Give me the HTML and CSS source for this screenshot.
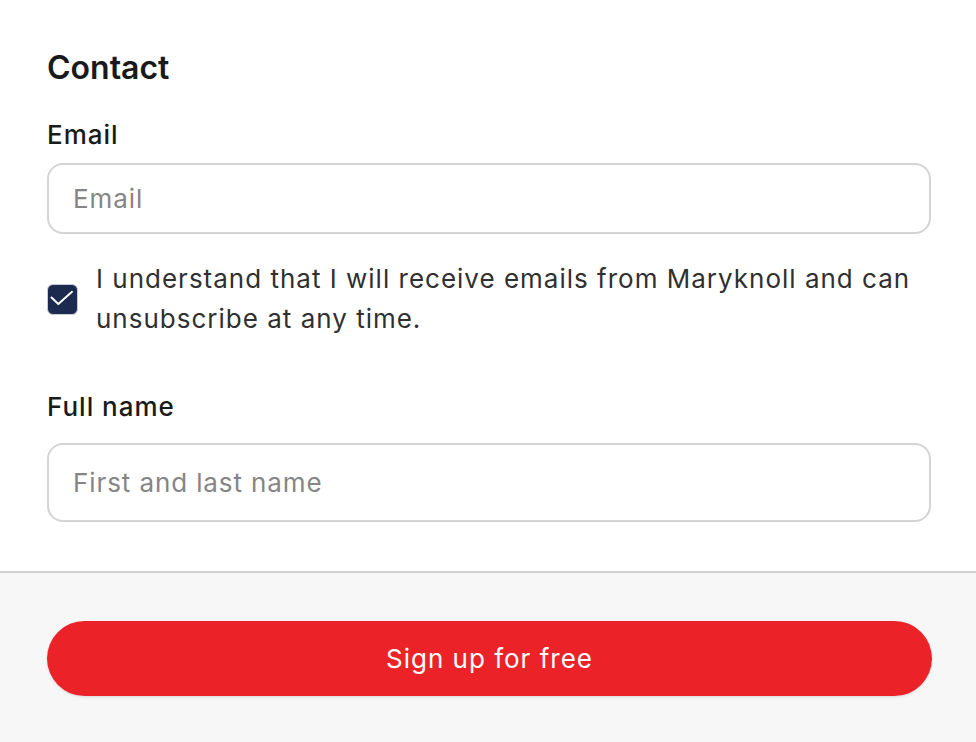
FILE: index.html
```html
<!DOCTYPE html>
<html lang="en">
<head>
  <meta charset="UTF-8">
  <meta name="viewport" content="width=device-width, initial-scale=1.0">
  <link rel="stylesheet" href="styles.css">
</head>
<body>
  <form class="signup">
    <div class="signup-body">
      <h2 class="section-title">Contact</h2>

      <label class="field-label" for="email">Email</label>
      <input class="text-input input-email" id="email" type="email" placeholder="Email">

      <label class="consent">
        <span class="checkbox">
          <svg viewBox="0 0 31 31" width="31" height="31">
            <path d="M4.5 14.5 L11.3 21 L25 8.8" fill="none" stroke="#fff" stroke-width="2" stroke-linecap="round" stroke-linejoin="round"/>
          </svg>
        </span>
        <span class="consent-text">I understand that I will receive emails from Maryknoll and can unsubscribe at any time.</span>
      </label>

      <label class="field-label label-name" for="fullname">Full name</label>
      <input class="text-input input-name" id="fullname" type="text" placeholder="First and last name">
    </div>

    <div class="signup-footer">
      <button class="submit-button" type="button">Sign up for free</button>
    </div>
  </form>
</body>
</html>
```

FILE: styles.css
```css
body {
  margin: 0;
  background: #fff;
  font-family: Inter, "Noto Sans", sans-serif;
  letter-spacing: 1px;
  color: #1a1a1a;
}

.signup-body {
  display: flex;
  flex-direction: column;
  padding: 48px 45px 49px 47px;
}

.section-title {
  margin: 0 0 31px;
  font-size: 32px;
  line-height: 40px;
  font-weight: 600;
  letter-spacing: 0;
  color: #1a1a1a;
}

.field-label {
  margin-bottom: 12px;
  font-size: 26px;
  line-height: 32px;
  font-weight: 500;
  color: #1a1a1a;
}

.label-name {
  margin-top: 52px;
  margin-bottom: 20px;
}

.text-input {
  box-sizing: border-box;
  width: 100%;
  padding: 0 24px;
  border: 2px solid #d4d4d4;
  border-radius: 16px;
  background: #fff;
  font-family: inherit;
  font-size: 26px;
  letter-spacing: 0.9px;
  color: #1a1a1a;
  outline: none;
}

.text-input::placeholder {
  color: #858585;
}

.input-email {
  height: 71px;
}

.input-name {
  height: 79px;
}

/* Checkbox + consent text */
.consent {
  display: flex;
  align-items: center;
  gap: 18px;
  margin-top: 25px;
}

.checkbox {
  flex: none;
  display: flex;
  box-sizing: border-box;
  width: 31px;
  height: 31px;
  border: 1.5px solid #c9ccd3;
  border-radius: 6px;
  background: #1b2a4e;
  overflow: hidden;
}

.checkbox svg {
  margin: -1.5px;
}

.consent-text {
  font-size: 26px;
  line-height: 40px;
  color: #303030;
}

/* Footer */
.signup-footer {
  border-top: 2px solid #d2d2d2;
  background: #f7f7f7;
  padding: 48px 44px 0 47px;
  height: 121px;
}

.submit-button {
  display: block;
  width: 100%;
  height: 75px;
  border: none;
  border-radius: 38px;
  background: #ec2229;
  box-shadow: 0 1px 3px rgba(0, 0, 0, 0.12);
  font-family: inherit;
  font-size: 26px;
  letter-spacing: 1px;
  color: #fff;
  cursor: pointer;
}
```
